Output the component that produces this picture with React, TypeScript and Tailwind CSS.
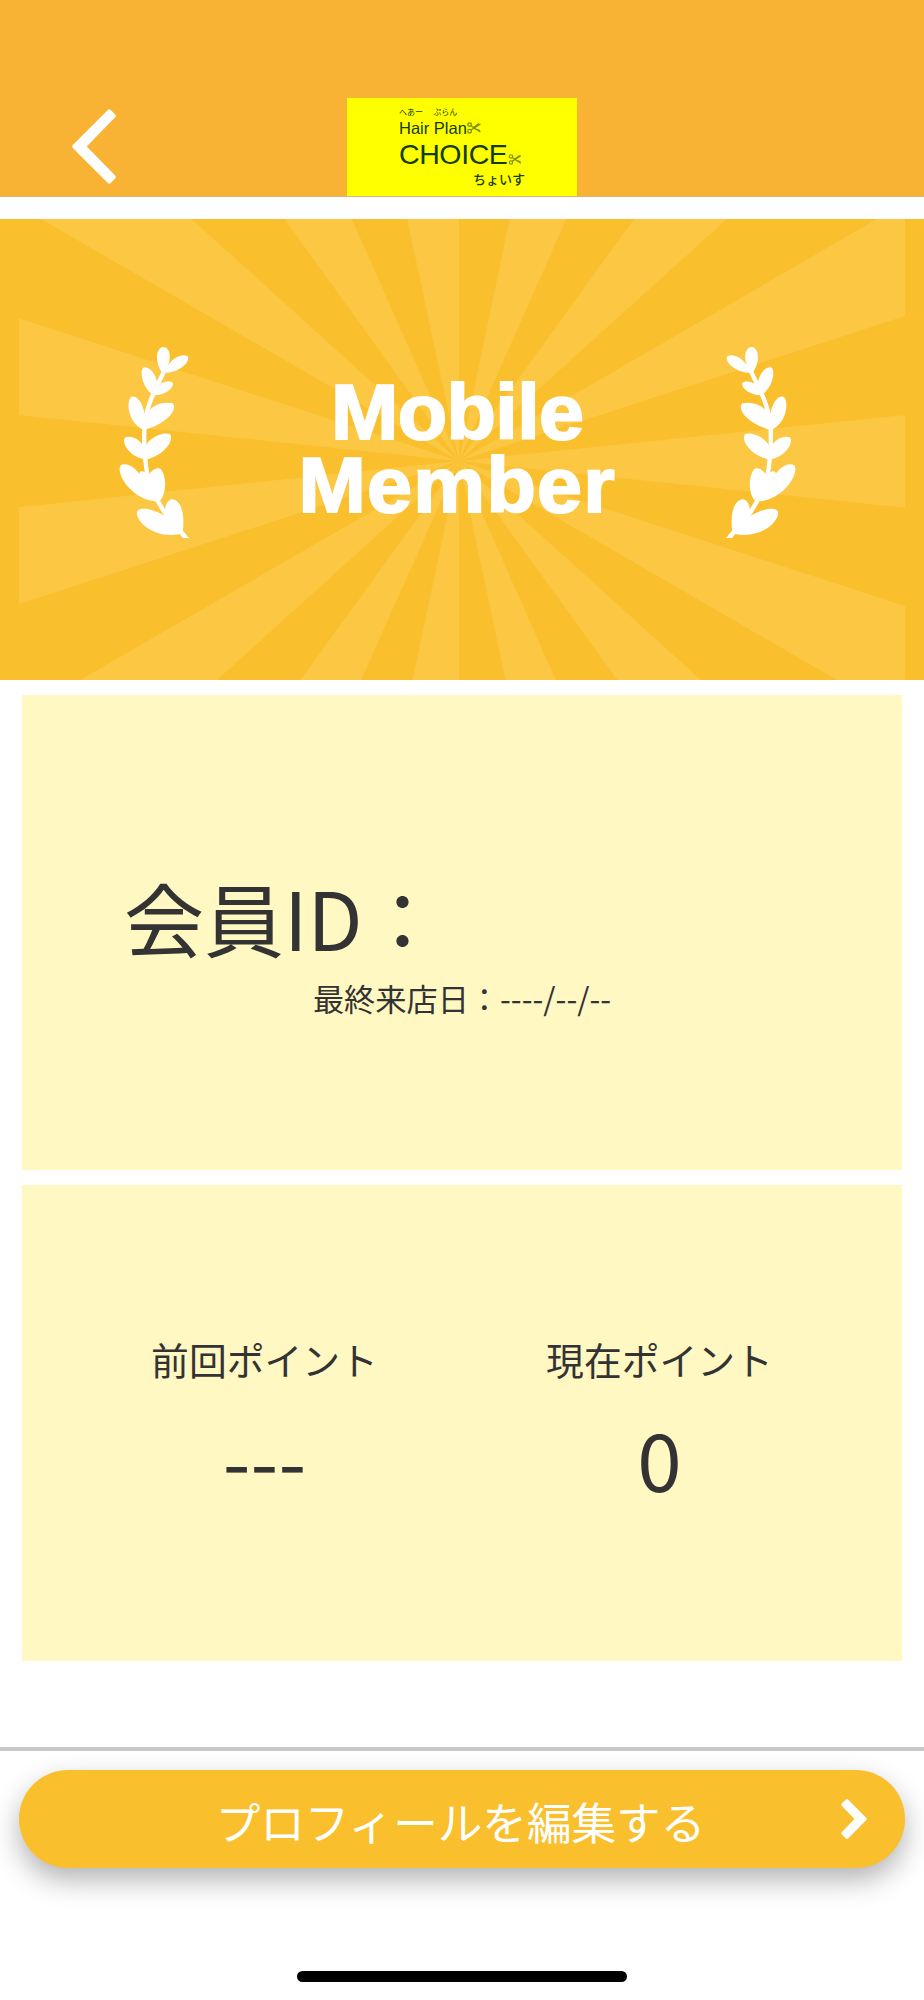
const INK = "text-[#333333]";

function Scissors({ className }: { className: string }) {
  return (
    <svg viewBox="0 0 14 12" className={className} fill="none" stroke="#7f8f00" strokeWidth="1.3">
      <circle cx="2.6" cy="2.6" r="1.8" />
      <circle cx="2.6" cy="9.2" r="1.8" />
      <path d="M4 3.8 13.4 10M4 8 13.4 2M5.6 5.8 13 8.6M5.6 6.2 12 1.6" />
    </svg>
  );
}

function Rays() {
  return (
    <svg viewBox="0 219 924 461" className="absolute inset-0 h-full w-full" fill="#fcc743">
      <path d="M459 461 41 219H191.5ZM459 461 284.6 219H351.8ZM459 461 407.2 219H459ZM459 461 509.7 219H566.3ZM459 461 634 219H727ZM459 461 877 219H905V316Z" />
      <path d="M459 461 19 318.3V415ZM459 461 19 507.3V604ZM459 461 905 415V507.7ZM459 461 905 606V680H837Z" />
      <path d="M459 461 80 680H217ZM459 461 300.5 680H361ZM459 461 412.5 680H459ZM459 461 505.6 680H555.7ZM459 461 617.6 680H701Z" />
    </svg>
  );
}

function Laurel({ className }: { className: string }) {
  return (
    <svg viewBox="0 0 330 660" className={className} fill="#fff">
      <path
        d="M192 124C172 168 134 230 133 300C131 350 136 400 143 440C156 490 180 525 205 565L256 620"
        fill="none"
        stroke="#fff"
        strokeWidth="13"
      />
      <path d="M188 129C162 96 168 52 190 51C211 52 214 84 204 106C218 82 248 70 262 78C275 92 240 130 188 129Z" />
      <path d="M161 196C128 176 116 121 132 112C153 110 173 140 171 168C184 156 207 150 218 158C224 172 196 196 161 196Z" />
      <path d="M132 300C80 278 78 205 96 200C117 196 135 235 135 268C142 230 183 212 218 220C236 240 197 283 132 300Z" />
      <path d="M138 389C86 382 62 334 76 322C96 315 127 330 134 360C138 328 184 304 210 312C224 332 192 376 138 389Z" />
      <path d="M178 514C100 517 45 432 62 406C80 395 106 414 118 432C116 421 134 418 144 440C150 423 172 408 183 418C202 445 199 495 178 514Z" />
      <path d="M240 612C160 628 102 570 112 543C122 528 170 540 200 562C189 535 200 509 217 508C249 512 254 565 248 607L268 624H248Z" />
    </svg>
  );
}

function Points({ label, value }: { label: string; value: string }) {
  return (
    <div className="flex w-[395px] flex-col items-center">
      <div className="text-[37.8px] leading-[56px]">{label}</div>
      <div className="mt-[12px] text-[80px] leading-[116px]">{value}</div>
    </div>
  );
}

export default function App() {
  return (
    <div
      className={`flex h-[2000px] w-[924px] flex-col overflow-hidden bg-white font-['Noto_Sans_CJK_JP',sans-serif] ${INK}`}
    >
      <header className="grid h-[197px] shrink-0 grid-cols-3 border-b border-[#d8b878] bg-[#f8b334] pt-[98px]">
        <button className="flex items-start pl-[60px]" aria-label="戻る">
          <svg viewBox="0 3 80 97" className="h-[97px] w-[80px]" fill="#fff" stroke="#fff" strokeWidth="4" strokeLinejoin="round">
            <path d="M14.2 51.5 49.3 16.3 53.8 20.8 23.8 51.5 53.8 82 49.3 86.5Z" />
          </svg>
        </button>
        <div className="mx-auto flex h-[98px] w-[230px] flex-col bg-[#ffff00] pl-[52px] font-['Liberation_Sans','Noto_Sans_CJK_JP',sans-serif] text-[#123c00]">
          <div className="mt-[10px] h-[10px] text-[8px] leading-[10px] whitespace-pre">へあー　 ぷらん</div>
          <div className="flex h-[20px] items-center text-[16.5px] leading-[20px]">
            Hair Plan
            <Scissors className="h-[12px] w-[14px]" />
          </div>
          <div className="flex h-[33px] items-center text-[28.5px] leading-[33px] tracking-[-0.4px]">
            CHOICE
            <Scissors className="mt-[9px] ml-[1px] h-[11px] w-[14px]" />
          </div>
          <div className="pl-[74px] text-[13px] leading-[17px] font-medium">ちょいす</div>
        </div>
      </header>

      <section className="relative mt-[22px] flex h-[461px] shrink-0 items-start justify-between bg-[#fabf2d] pr-[109px] pl-[100px]">
        <Rays />
        <Laurel className="relative mt-[111px] h-[220px] w-[110px]" />
        <h1 className="relative mt-[157px] scale-x-[1.05] text-center font-['Liberation_Sans',sans-serif] text-[77px] leading-[73px] font-bold text-white [-webkit-text-stroke:2px_white]">
          <span className="block tracking-[-0.6px]">Mobile</span>
          <span className="block tracking-[1.2px]">Member</span>
        </h1>
        <Laurel className="relative mt-[111px] h-[220px] w-[110px] -scale-x-100" />
      </section>

      <section className="mx-[22px] mt-[15px] h-[475px] shrink-0 bg-[#fff8c3] pt-[163px]">
        <div className="pl-[102px] text-[80px] leading-[116px]">会員ID：</div>
        <div className="mt-[4px] text-center text-[31.2px] leading-[40px]">最終来店日：----/--/--</div>
      </section>

      <section className="mx-[22px] mt-[15px] flex h-[476px] shrink-0 justify-center bg-[#fff8c3] pt-[146px]">
        <Points label="前回ポイント" value="---" />
        <Points label="現在ポイント" value="0" />
      </section>

      <footer className="mt-[86px] flex grow flex-col border-t-4 border-[#c9c9c9] px-[19px] pt-[19px]">
        <button className="flex h-[98px] items-center rounded-full bg-[#fabf2d] text-[44.6px] text-white shadow-[0_12px_28px_rgba(0,0,0,0.3)]">
          <span className="w-[62px]" />
          <span className="grow pt-[4px] text-center">プロフィールを編集する</span>
          <svg viewBox="20 57 28 42" className="mr-[37px] h-[42px] w-[28px]" fill="#fff" stroke="#fff" strokeWidth="3" strokeLinejoin="round">
            <path d="M27 59.5 45.3 78 27 96.5 22.7 92.2 36.5 78 22.7 63.8Z" />
          </svg>
        </button>
        <div className="mx-auto mt-[103px] h-[11px] w-[330px] rounded-full bg-black" />
      </footer>
    </div>
  );
}
